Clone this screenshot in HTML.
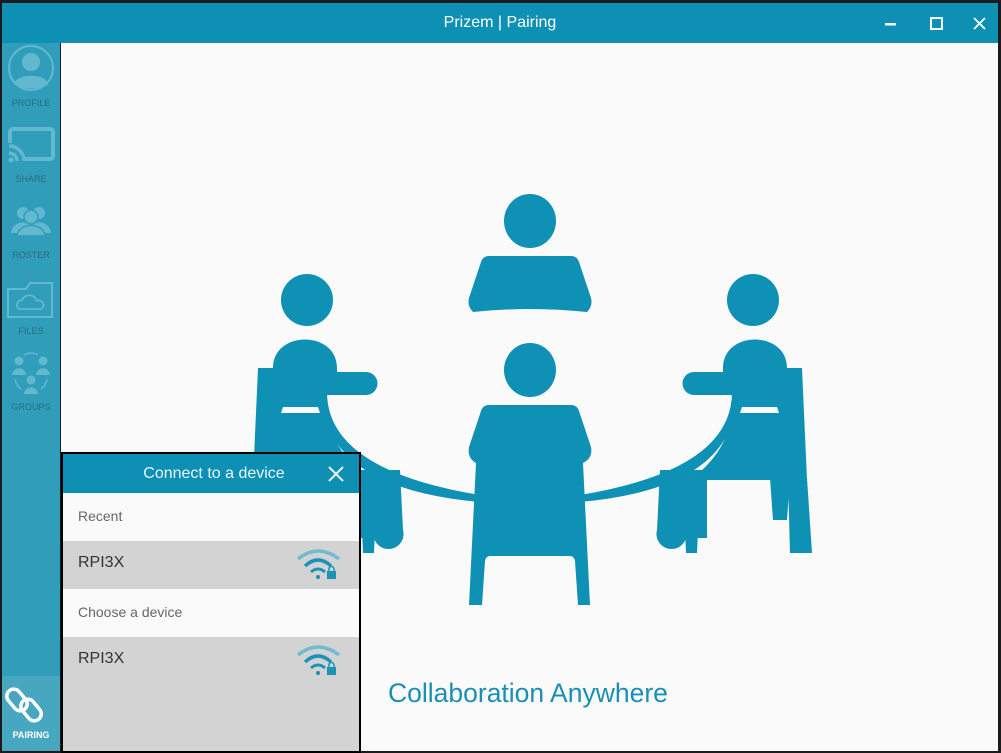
<!DOCTYPE html>
<html><head><style>
*{margin:0;padding:0;box-sizing:border-box}
body{width:1001px;height:753px;background:#1b1b1b;position:relative;overflow:hidden;font-family:"Liberation Sans",sans-serif}
#title{position:absolute;left:2px;top:3px;width:996px;height:40px;background:#0e8fb4;color:#fff;font-size:16px;text-align:center;line-height:40px}
#side{position:absolute;left:2px;top:43px;width:58px;height:708px;background:#309eba}
#main{position:absolute;left:61px;top:43px;width:937px;height:708px;background:#fafafa}
.lbl{position:absolute;left:0;width:58px;text-align:center;font-size:9px;color:#2a6a80}
#pair{position:absolute;left:0;top:633px;width:58px;height:75px;background:#47a7c1}
#pop{position:absolute;left:61px;top:452px;width:300px;height:301px;background:#d3d3d3;border:2px solid #000}
#ph{height:39px;background:#0e8fb4;color:#eaf6fa;font-size:16px;line-height:39px;text-align:center;padding-left:6px}
.sec{height:48px;background:#fafafa;color:#666;font-size:14px;line-height:46px;padding-left:15px}
.row{height:48px;background:#d3d3d3;color:#333;font-size:16px;line-height:44px;padding-left:15px;position:relative}
.row svg{position:absolute;right:18px;top:8px}
#coll{position:absolute;left:388px;top:678px;font-size:26.5px;color:#1a8fb5}
</style></head><body>
<div id="title">Prizem | Pairing
<svg style="position:absolute;left:880px;top:12px" width="110" height="18" viewBox="0 0 110 18"><rect x="3" y="8" width="11" height="2.5" fill="#fff"/><rect x="49" y="3" width="11" height="11" fill="none" stroke="#fff" stroke-width="2"/><path d="M92 3 L103 14 M103 3 L92 14" stroke="#fff" stroke-width="1.8"/></svg>
</div>
<div id="main"></div>
<div id="side">
<svg width="58" height="380" viewBox="0 0 58 380" style="position:absolute;left:0;top:0">
<g fill="#62b8cf" stroke="#62b8cf">
<circle cx="29" cy="25" r="22" fill="none" stroke-width="2"/>
<circle cx="29" cy="19" r="9" stroke="none"/>
<path d="M12 41 C14 30 44 30 46 41 C40 47 18 47 12 41Z" stroke="none"/>
<rect x="8" y="86" width="43" height="30" rx="3" fill="none" stroke-width="4"/>
<rect x="4" y="100" width="18" height="20" fill="#309eba" stroke="none"/>
<path d="M7 103 a15 15 0 0 1 15 15" fill="none" stroke-width="3.5"/>
<path d="M7 110 a8 8 0 0 1 8 8" fill="none" stroke-width="3.5"/>
<circle cx="9" cy="117" r="2.5" stroke="none"/>
<circle cx="21" cy="170" r="6" stroke="none"/><circle cx="37" cy="170" r="6" stroke="none"/>
<path d="M9 190 C10 176 32 176 33 190Z M25 190 C26 176 48 176 49 190Z" stroke="none"/>
<circle cx="29" cy="174" r="7" stroke="#309eba" stroke-width="1.5"/>
<path d="M15 193 C16 179 42 179 43 193Z" stroke="#309eba" stroke-width="1.5"/>
<path d="M6 246 h18 l4 -6 h22 v34 h-44z" fill="none" stroke-width="2"/>
<path d="M17 266 a5 5 0 0 1 3 -9 a8 8 0 0 1 15 1 a4 4 0 0 1 4 8z" fill="none" stroke-width="1.8"/>
<circle cx="17" cy="318" r="4.5" stroke="none"/><circle cx="41" cy="318" r="4.5" stroke="none"/><circle cx="29" cy="337" r="4.5" stroke="none"/>
<path d="M10 332 c1-9 13-9 14 0z M34 332 c1-9 13-9 14 0z M22 351 c1-9 13-9 14 0z" stroke="none"/>
<path d="M22 312 a14 14 0 0 1 14 0 M13 336 a16 16 0 0 0 6 10 M45 336 a16 16 0 0 1 -6 10" fill="none" stroke-width="1.5"/>
</g></svg>
<div class="lbl" style="top:55px">PROFILE</div>
<div class="lbl" style="top:131px">SHARE</div>
<div class="lbl" style="top:207px">ROSTER</div>
<div class="lbl" style="top:283px">FILES</div>
<div class="lbl" style="top:359px">GROUPS</div>
<div id="pair">
<svg width="58" height="50" viewBox="0 0 58 50" style="position:absolute;left:0;top:4px"><g fill="none" stroke="#fff" stroke-width="3.5"><rect x="8" y="8" width="14" height="24" rx="7" transform="rotate(-40 15 20)"/><rect x="22" y="18" width="14" height="24" rx="7" transform="rotate(-40 29 30)"/></g></svg>
<div class="lbl" style="top:54px;color:#fff;font-weight:bold;font-size:9px">PAIRING</div>
</div>
</div>
<svg style="position:absolute;left:0;top:0" width="1001" height="753" viewBox="0 0 1001 753">
<defs>
<g id="sideP">
<circle cx="307" cy="300" r="26"/>
<path d="M258 368 L273 368 C273 330 337 330 337 368 L337 372 L366 372 a11.5 11.5 0 0 1 0 23 L327 395 L327 410 Q332 450 365 476 L365 480 L253 480 Z"/>
<path d="M253 478 L272 478 L270 553 L248 553Z"/>
<path d="M270 478 L290 478 L287 520 L273 520Z"/>
<path d="M353 470 L400 470 L403 530 A15 15 0 0 1 374 538 L353 538Z"/>
<path d="M362 530 L375 530 L374 553 L363 553Z"/>
</g>
</defs>
<g fill="#0f90b5">
<ellipse cx="530" cy="221" rx="26" ry="27"/>
<path d="M489 256 L571 256 Q577 256 579 262 L591 298 Q593 306 587 312 Q530 306 473 312 Q467 306 469 298 L481 262 Q483 256 489 256Z"/>
<path d="M327 392 Q327 470 480 495 L580 495 Q732 470 732 392 L737 392 Q737 488 580 502 L480 502 Q322 488 322 392Z"/>
<use href="#sideP"/>
<use href="#sideP" transform="translate(1060 0) scale(-1 1)"/>
<ellipse cx="530" cy="370" rx="26" ry="27"/>
<path d="M489 405 L571 405 Q577 405 579 411 L591 447 Q593 458 583 463 L590 605 L578 605 L575 561 Q574 556 570 556 L490 556 Q486 556 485 561 L482 605 L469 605 L476 463 Q467 458 469 447 L481 411 Q483 405 489 405Z"/>
</g>
<g fill="#fafafa"><path d="M283 407 L318 407 L320 413 L281 413Z"/><path d="M777 407 L742 407 L740 413 L779 413Z"/></g>
</svg>
<div id="coll">Collaboration Anywhere</div>
<div id="pop">
<div id="ph">Connect to a device<svg style="position:absolute;left:265px;top:12px" width="16" height="16"><path d="M1 1 L15 15 M15 1 L1 15" stroke="#eaf6fa" stroke-width="2"/></svg></div>
<div class="sec">Recent</div>
<div class="row">RPI3X<svg width="44" height="32" viewBox="0 0 44 32"><g fill="none"><path d="M1 10 Q21 -6 42 10" stroke="#72bccf" stroke-width="3.5"/><path d="M8 17 Q21 5 34 17" stroke="#1a93b8" stroke-width="3.5"/><path d="M14 23 Q21 17 28 23" stroke="#1a93b8" stroke-width="3"/></g><circle cx="21" cy="28" r="2" fill="#1a93b8"/><rect x="30" y="22" width="9" height="8" fill="#1a93b8"/><path d="M32 23 v-3 a2.5 2.5 0 0 1 5 0 v3" fill="none" stroke="#1a93b8" stroke-width="1.5"/></svg></div>
<div class="sec">Choose a device</div>
<div class="row" style="height:114px">RPI3X<svg width="44" height="32" viewBox="0 0 44 32"><g fill="none"><path d="M1 10 Q21 -6 42 10" stroke="#72bccf" stroke-width="3.5"/><path d="M8 17 Q21 5 34 17" stroke="#1a93b8" stroke-width="3.5"/><path d="M14 23 Q21 17 28 23" stroke="#1a93b8" stroke-width="3"/></g><circle cx="21" cy="28" r="2" fill="#1a93b8"/><rect x="30" y="22" width="9" height="8" fill="#1a93b8"/><path d="M32 23 v-3 a2.5 2.5 0 0 1 5 0 v3" fill="none" stroke="#1a93b8" stroke-width="1.5"/></svg></div>
</div>
</body></html>
